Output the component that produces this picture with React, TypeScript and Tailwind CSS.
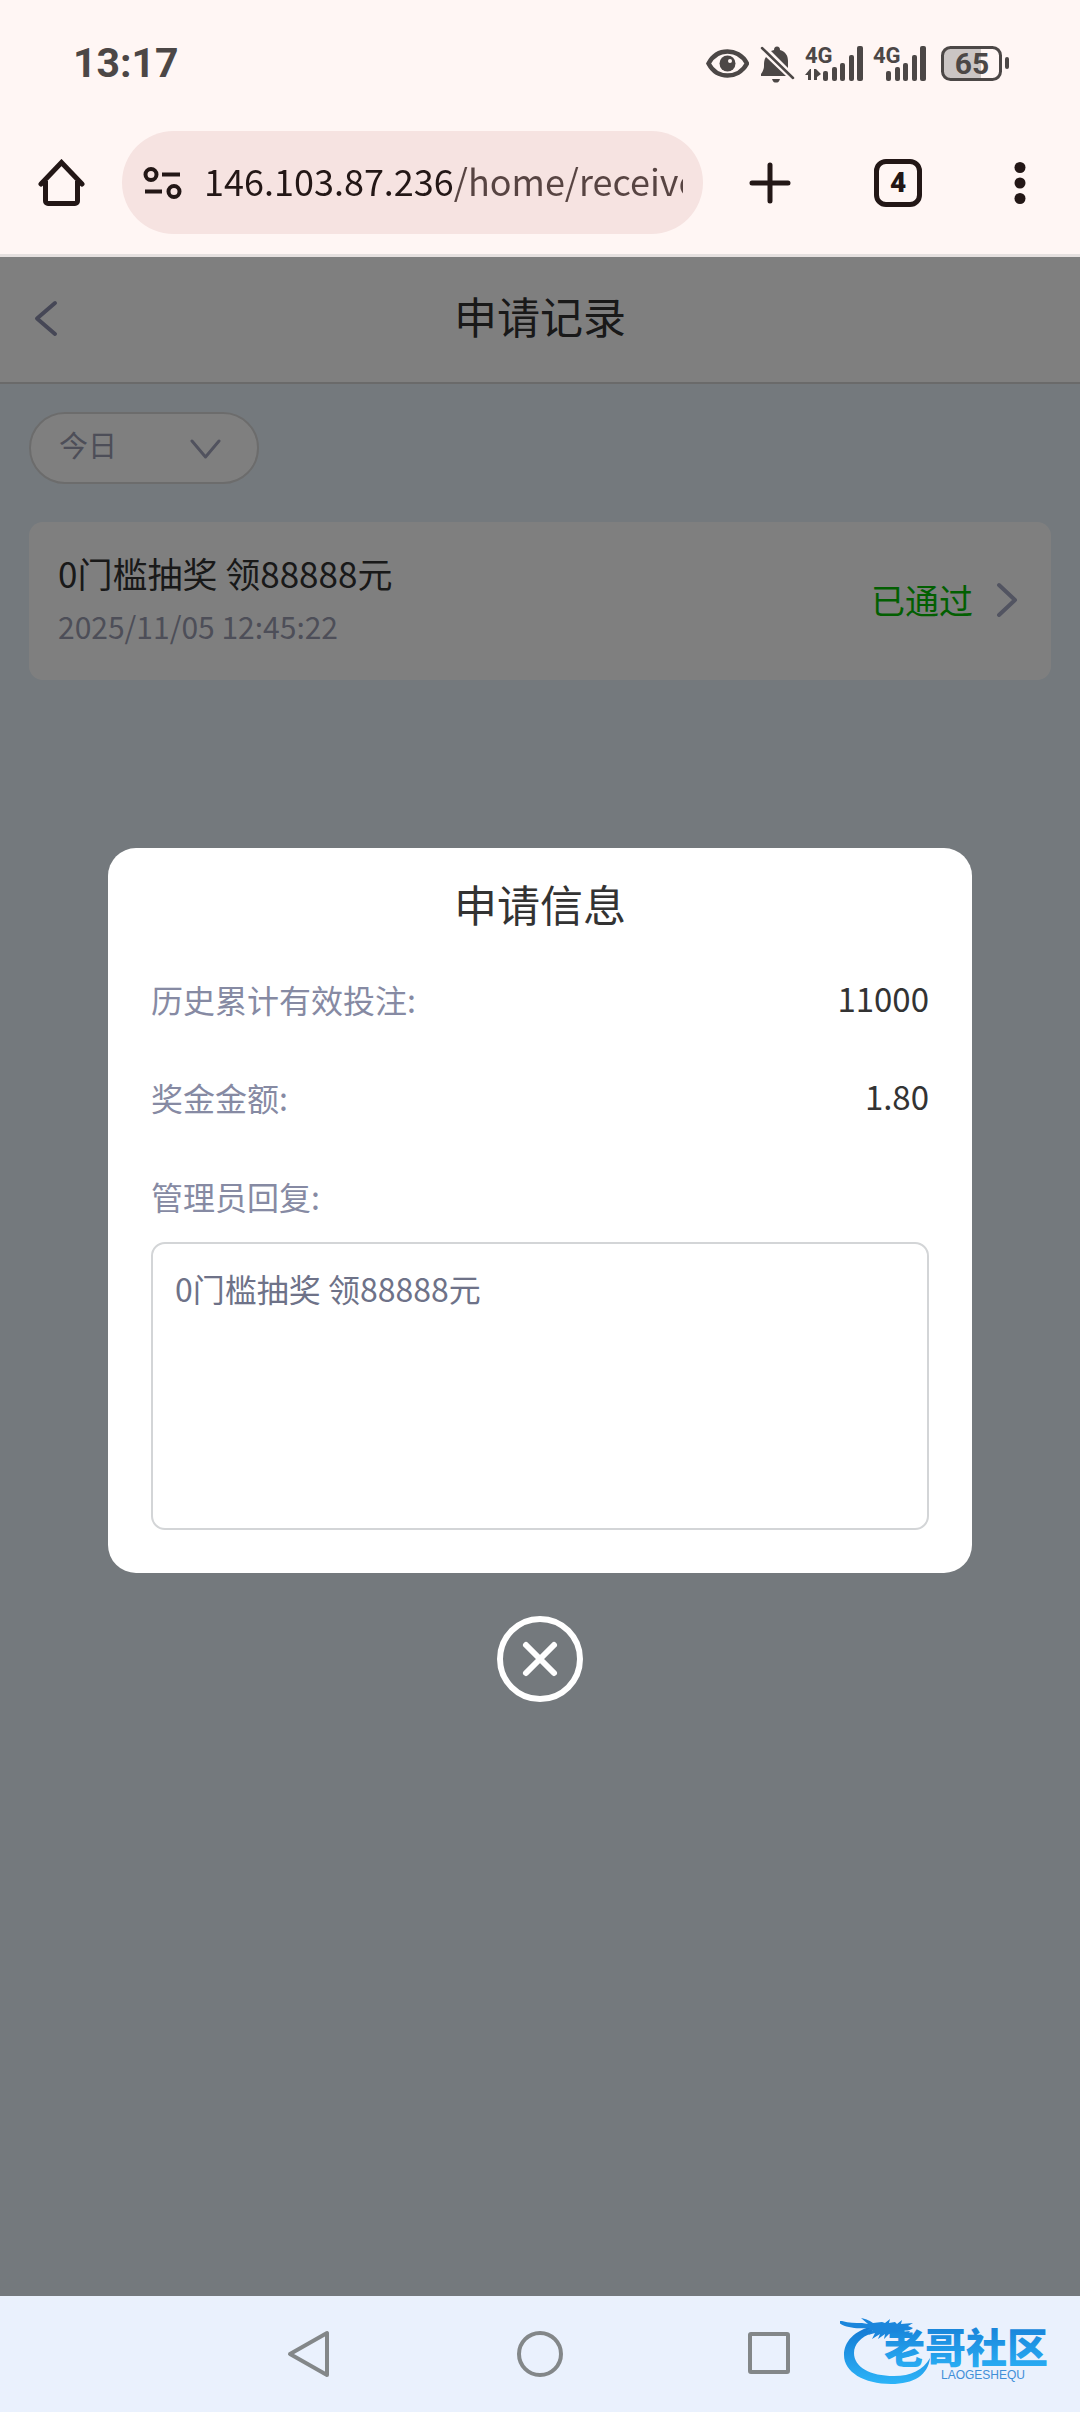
import { useState } from 'react';
import type { ReactNode } from 'react';

// ─────────────────────────────────────────────────────────────────────────────
// Application record page (申请记录) with the detail dialog open, inside the
// phone's browser chrome: status bar, address bar, page, system navigation.
// ─────────────────────────────────────────────────────────────────────────────

interface ApplyRecord {
  id: number;
  title: string;
  time: string;
  status: string;
  validBet: string;
  bonus: string;
  reply: string;
}

const RECORDS: ApplyRecord[] = [
  {
    id: 1,
    title: '0门槛抽奖 领88888元',
    time: '2025/11/05 12:45:22',
    status: '已通过',
    validBet: '11000',
    bonus: '1.80',
    reply: '0门槛抽奖 领88888元',
  },
];

const RANGES = ['今日', '昨日', '近7日', '近30日'];

function SignalIcon({ active }: { active?: boolean }) {
  return (
    <svg className="h-10 w-[58px]" viewBox="0 0 58 40" fill="currentColor" aria-hidden="true">
      <text x="0" y="20" fontSize="22" fontWeight="700" fontFamily="Roboto, sans-serif">4G</text>
      {active ? (
        <>
          <path d="M0 32l5-6h1v11H3v-5zM9 26h2l5 5-4 3v3H9z" />
          <rect x="18" y="28" width="5" height="10" rx="2" />
          <rect x="27" y="24" width="5" height="14" rx="2" />
          <rect x="35" y="20" width="5" height="18" rx="2" />
          <rect x="44" y="12" width="5" height="26" rx="2" />
          <rect x="52" y="3" width="6" height="35" rx="2" />
        </>
      ) : (
        <>
          <rect x="13" y="28" width="5" height="10" rx="2" />
          <rect x="22" y="24" width="5" height="14" rx="2" />
          <rect x="30" y="20" width="5" height="18" rx="2" />
          <rect x="39" y="12" width="5" height="26" rx="2" />
          <rect x="47" y="3" width="6" height="35" rx="2" />
        </>
      )}
    </svg>
  );
}

function StatusBar() {
  return (
    <div className="flex h-[126px] items-center justify-between pl-[73px] pr-[71px] text-[#4c4746]">
      <time className="font-[Roboto,sans-serif] text-[41px] font-bold leading-none">13:17</time>
      <div className="flex items-center gap-2.5">
        <svg className="h-10 w-[43px]" viewBox="0 0 43 40" fill="none" stroke="currentColor" aria-hidden="true">
          <path d="M2.500 20.500C7 12 14.500 8.500 21.500 8.500S36.500 12 41 20.500C36.500 29 28.500 32.500 21.500 32.500S7 29 2.500 20.500z" strokeWidth="4.500" />
          <circle cx="21.500" cy="20.500" r="8" fill="currentColor" stroke="none" />
          <circle cx="24" cy="18" r="2" fill="#fff6f4" stroke="none" />
        </svg>
        <svg className="h-10 w-[36px]" viewBox="0 0 36 40" fill="currentColor" aria-hidden="true">
          <path d="M7 14c-2 3-2 5-2 9 0 3-1 5-3 8v2h25z" />
          <path d="M12 8l3-1c0-2 1-3.500 3-3.500S21 5 21 7c6 2 8 6 8 11v7z" />
          <path d="M13 36h8c-1 3-2 3.500-4 3.500S14 39 13 36z" />
          <path d="M3 5l31 30" stroke="currentColor" strokeWidth="2.500" strokeLinecap="round" />
        </svg>
        <SignalIcon active />
        <SignalIcon />
        <svg className="h-10 w-[68px]" viewBox="0 0 68 40" fill="none" aria-hidden="true">
          <path d="M8 5h32v30H8a6 6 0 0 1-6-6V11a6 6 0 0 1 6-6z" fill="#cbc5c4" />
          <rect x="1.500" y="4.500" width="58" height="32" rx="8" stroke="currentColor" strokeWidth="3" />
          <rect x="64" y="14" width="4" height="12" rx="2" fill="currentColor" />
          <text x="31" y="31" textAnchor="middle" fontSize="30" fontWeight="700" fill="currentColor" fontFamily="Roboto, sans-serif">65</text>
        </svg>
      </div>
    </div>
  );
}

function BrowserBar() {
  return (
    <div className="flex items-center border-b-[3px] border-[#e5e0df] pb-5 pl-[37px] pr-[42px] pt-[5px] text-[#231716]">
      <button type="button" aria-label="主页" className="h-12 w-12 shrink-0">
        <svg viewBox="0 0 48 48" fill="none" stroke="currentColor" strokeWidth="5" aria-hidden="true">
          <path d="M4 25L24.500 3.500 45 25" strokeLinecap="round" />
          <path d="M8.500 22v20a2.500 2.500 0 0 0 2.500 2.500h27a2.500 2.500 0 0 0 2.500-2.500V22" />
        </svg>
      </button>
      <div className="ml-[37px] flex h-[103px] min-w-0 flex-1 items-center rounded-full bg-[#f6e3e1] pl-5 pr-5">
        <svg className="h-10 w-10 shrink-0" viewBox="0 0 40 40" fill="none" stroke="currentColor" strokeWidth="4" aria-hidden="true">
          <circle cx="9" cy="11.500" r="5.500" />
          <path d="M20 11.500h18M3 28.500h17" />
          <circle cx="32" cy="28.500" r="5.500" />
        </svg>
        {/* host is dark, path is muted */}
        <input
          type="text"
          aria-label="网址"
          readOnly
          value="146.103.87.236/home/receive"
          className="mb-1.5 ml-[22px] min-w-0 flex-1 bg-linear-to-r from-[#231716] from-[249px] to-[#574442] to-[249px] bg-clip-text text-[36px] leading-[52px] text-transparent outline-none"
        />
      </div>
      <button type="button" aria-label="新标签页" className="ml-[43px] h-12 w-12 shrink-0">
        <svg viewBox="0 0 48 48" stroke="currentColor" strokeWidth="5" strokeLinecap="round" aria-hidden="true">
          <path d="M24 6v36M6 24h36" />
        </svg>
      </button>
      <button
        type="button"
        aria-label="切换标签页"
        className="ml-20 flex h-12 w-12 shrink-0 items-center justify-center rounded-xl border-[5px] border-current font-[Roboto,sans-serif] text-[28px] font-black leading-none"
      >
        4
      </button>
      <button type="button" aria-label="更多" className="ml-20 h-12 w-9 shrink-0">
        <svg viewBox="0 0 36 48" fill="currentColor" aria-hidden="true">
          <circle cx="18" cy="8.500" r="5.500" />
          <circle cx="18" cy="24" r="5.500" />
          <circle cx="18" cy="39.500" r="5.500" />
        </svg>
      </button>
    </div>
  );
}

function RecordCard({ record, onOpen }: { record: ApplyRecord; onOpen: () => void }) {
  return (
    <button
      type="button"
      onClick={onOpen}
      className="flex w-full items-center justify-between rounded-[14px] bg-white pb-7 pl-[29px] pr-8 pt-6 text-left"
    >
      <span className="block">
        <span className="block text-[35px] leading-[54px] text-[#333]">{record.title}</span>
        <span className="block text-[30px] leading-[52px] text-[#9a9cb0]">{record.time}</span>
      </span>
      <span className="flex items-center gap-[22px] text-[34px] text-[#04be02]">
        {record.status}
        <svg className="h-9 w-6 text-[#a4a8c2]" viewBox="0 0 24 36" fill="none" stroke="currentColor" strokeWidth="4" strokeLinecap="round" strokeLinejoin="round" aria-hidden="true">
          <path d="M4 4l16 15L4 34" />
        </svg>
      </span>
    </button>
  );
}

function InfoRow({ label, children }: { label: string; children: ReactNode }) {
  return (
    <div className="flex h-[98px] items-center justify-between">
      <dt className="text-[32px] text-[#868aa3]">{label}</dt>
      <dd className="text-[33px] text-[#333]">{children}</dd>
    </div>
  );
}

function InfoDialog({ record, onClose }: { record: ApplyRecord; onClose: () => void }) {
  return (
    <div
      className="absolute inset-0 flex flex-col items-center justify-center bg-black/50 pb-[3px]"
      role="dialog"
      aria-modal="true"
      aria-labelledby="info-title"
    >
      <div className="w-4/5 rounded-[28px] bg-white px-[43px] pb-[43px] pt-2">
        <h2 id="info-title" className="text-center text-[43px] leading-[94px] text-[#333]">申请信息</h2>
        <dl>
          <InfoRow label="历史累计有效投注:">{record.validBet}</InfoRow>
          <InfoRow label="奖金金额:">{record.bonus}</InfoRow>
        </dl>
        <label htmlFor="reply" className="mb-6 mt-7 block text-[32px] leading-[44px] text-[#868aa3]">
          管理员回复:
        </label>
        <textarea
          id="reply"
          readOnly
          value={record.reply}
          className="block h-[288px] w-full resize-none rounded-[14px] border-2 border-[#d3d5d7] px-[22px] py-5 text-[32px] leading-[48px] text-[#6e7288] outline-none"
        />
      </div>
      <button type="button" aria-label="关闭" onClick={onClose} className="mt-[43px] h-[86px] w-[86px] text-white">
        <svg viewBox="0 0 86 86" fill="none" stroke="currentColor" strokeWidth="6" aria-hidden="true">
          <circle cx="43" cy="43" r="40" />
          <path d="M29 29l28 28M57 29L29 57" strokeLinecap="round" />
        </svg>
      </button>
    </div>
  );
}

function CommunityLogo() {
  return (
    <svg className="absolute right-[15px] top-[19px] h-[74px] w-[225px]" viewBox="0 0 225 74" role="img" aria-label="老哥社区 LAOGESHEQU">
      <defs>
        <linearGradient id="logo-blue" x1="0" y1="0" x2="0" y2="1">
          <stop offset="0" stopColor="#1478d2" />
          <stop offset="1" stopColor="#2cb4f8" />
        </linearGradient>
      </defs>
      {/* body sweeping round to the tail */}
      <path
        d="M34 11C14 15 4 27 4 40c0 17 20 29 47 29 23 0 37-9 39-26-7 12-19 18-36 18-24 0-40-9-40-23 0-9 7-16 18-20z"
        fill="url(#logo-blue)"
      />
      {/* head, horn and whiskers */}
      <path
        d="M2 6c7 2 13 2 20 2l6 1-7-6c6 1 9 3 12 5l9-1 3 1 5-4-1 4 6-1 2 2 5-4-1 4 12-1-5 3 5 2c-3 3-8 3-13 2l1 2 9-1-3 4c-4 1-8-1-12-2l-6 1-5 5 1-5-7 5 2-5-8 5 3-6-7 2 5-5-7 1 4-3c-7 0-14 1-21-1-5-1-9-3-12-6z"
        fill="#1b86dc"
      />
      <text x="44" y="48" fontSize="41" fontWeight="900" fill="url(#logo-blue)" fontFamily="Noto Sans CJK SC, sans-serif">老哥社区</text>
      <text x="101" y="64" fontSize="12" fill="#3f8fd8" fontFamily="Liberation Sans, sans-serif">LAOGESHEQU</text>
    </svg>
  );
}

function SystemNav() {
  return (
    <nav className="relative grid h-[116px] grid-cols-3 items-center justify-items-center bg-[#eaf1fd] px-[18%] text-[#838789]">
      <button type="button" aria-label="返回" className="h-12 w-12">
        <svg viewBox="0 0 48 48" fill="none" stroke="currentColor" strokeWidth="4" strokeLinejoin="round" aria-hidden="true">
          <path d="M4 24L41 3v42z" />
        </svg>
      </button>
      <button type="button" aria-label="桌面" className="h-12 w-12">
        <svg viewBox="0 0 48 48" fill="none" stroke="currentColor" strokeWidth="4" aria-hidden="true">
          <circle cx="24" cy="24" r="21" />
        </svg>
      </button>
      <button type="button" aria-label="最近任务" className="h-12 w-12">
        <svg viewBox="0 0 48 48" fill="none" stroke="currentColor" strokeWidth="4" strokeLinejoin="round" aria-hidden="true">
          <rect x="4" y="4" width="38" height="38" rx="1" />
        </svg>
      </button>
      <CommunityLogo />
    </nav>
  );
}

export default function App() {
  const [range, setRange] = useState(RANGES[0]);
  const [opened, setOpened] = useState<ApplyRecord | null>(RECORDS[0]);

  return (
    <div className="flex min-h-screen flex-col bg-[#fff6f4] font-['Noto_Sans_CJK_SC',sans-serif]">
      <StatusBar />
      <BrowserBar />

      <main className="relative flex-1 bg-[#e8f2fa]">
        <header className="grid grid-cols-[1fr_auto_1fr] items-center border-b-2 border-[#d5d5d5] bg-white px-7">
          <button type="button" aria-label="返回上一页" className="mb-1 h-12 w-9">
            <svg viewBox="0 0 36 48" fill="none" stroke="#8c8fac" strokeWidth="4" strokeLinecap="round" strokeLinejoin="round" aria-hidden="true">
              <path d="M27 9L9 24.500 27 40" />
            </svg>
          </button>
          <h1 className="pb-2 text-[43px] leading-[117px] text-[#333]">申请记录</h1>
        </header>

        <div className="px-[29px] pt-7">
          <div className="relative w-[230px]">
            <select
              aria-label="时间范围"
              value={range}
              onChange={(e) => setRange(e.target.value)}
              className="h-[72px] w-full appearance-none rounded-full border-2 border-[#d8d8d8] bg-white pb-1.5 pl-7 text-[29px] text-[#9a9cb0] outline-none"
            >
              {RANGES.map((r) => (
                <option key={r}>{r}</option>
              ))}
            </select>
            <svg className="pointer-events-none absolute right-[37px] top-6 h-6 w-8" viewBox="0 0 32 24" fill="none" stroke="#a2a5bc" strokeWidth="3" strokeLinecap="round" strokeLinejoin="round" aria-hidden="true">
              <path d="M2 5l13.500 16L29 5" />
            </svg>
          </div>

          <ul className="mt-[38px]">
            {RECORDS.map((r) => (
              <li key={r.id}>
                <RecordCard record={r} onOpen={() => setOpened(r)} />
              </li>
            ))}
          </ul>
        </div>

        {opened && <InfoDialog record={opened} onClose={() => setOpened(null)} />}
      </main>

      <SystemNav />
    </div>
  );
}
